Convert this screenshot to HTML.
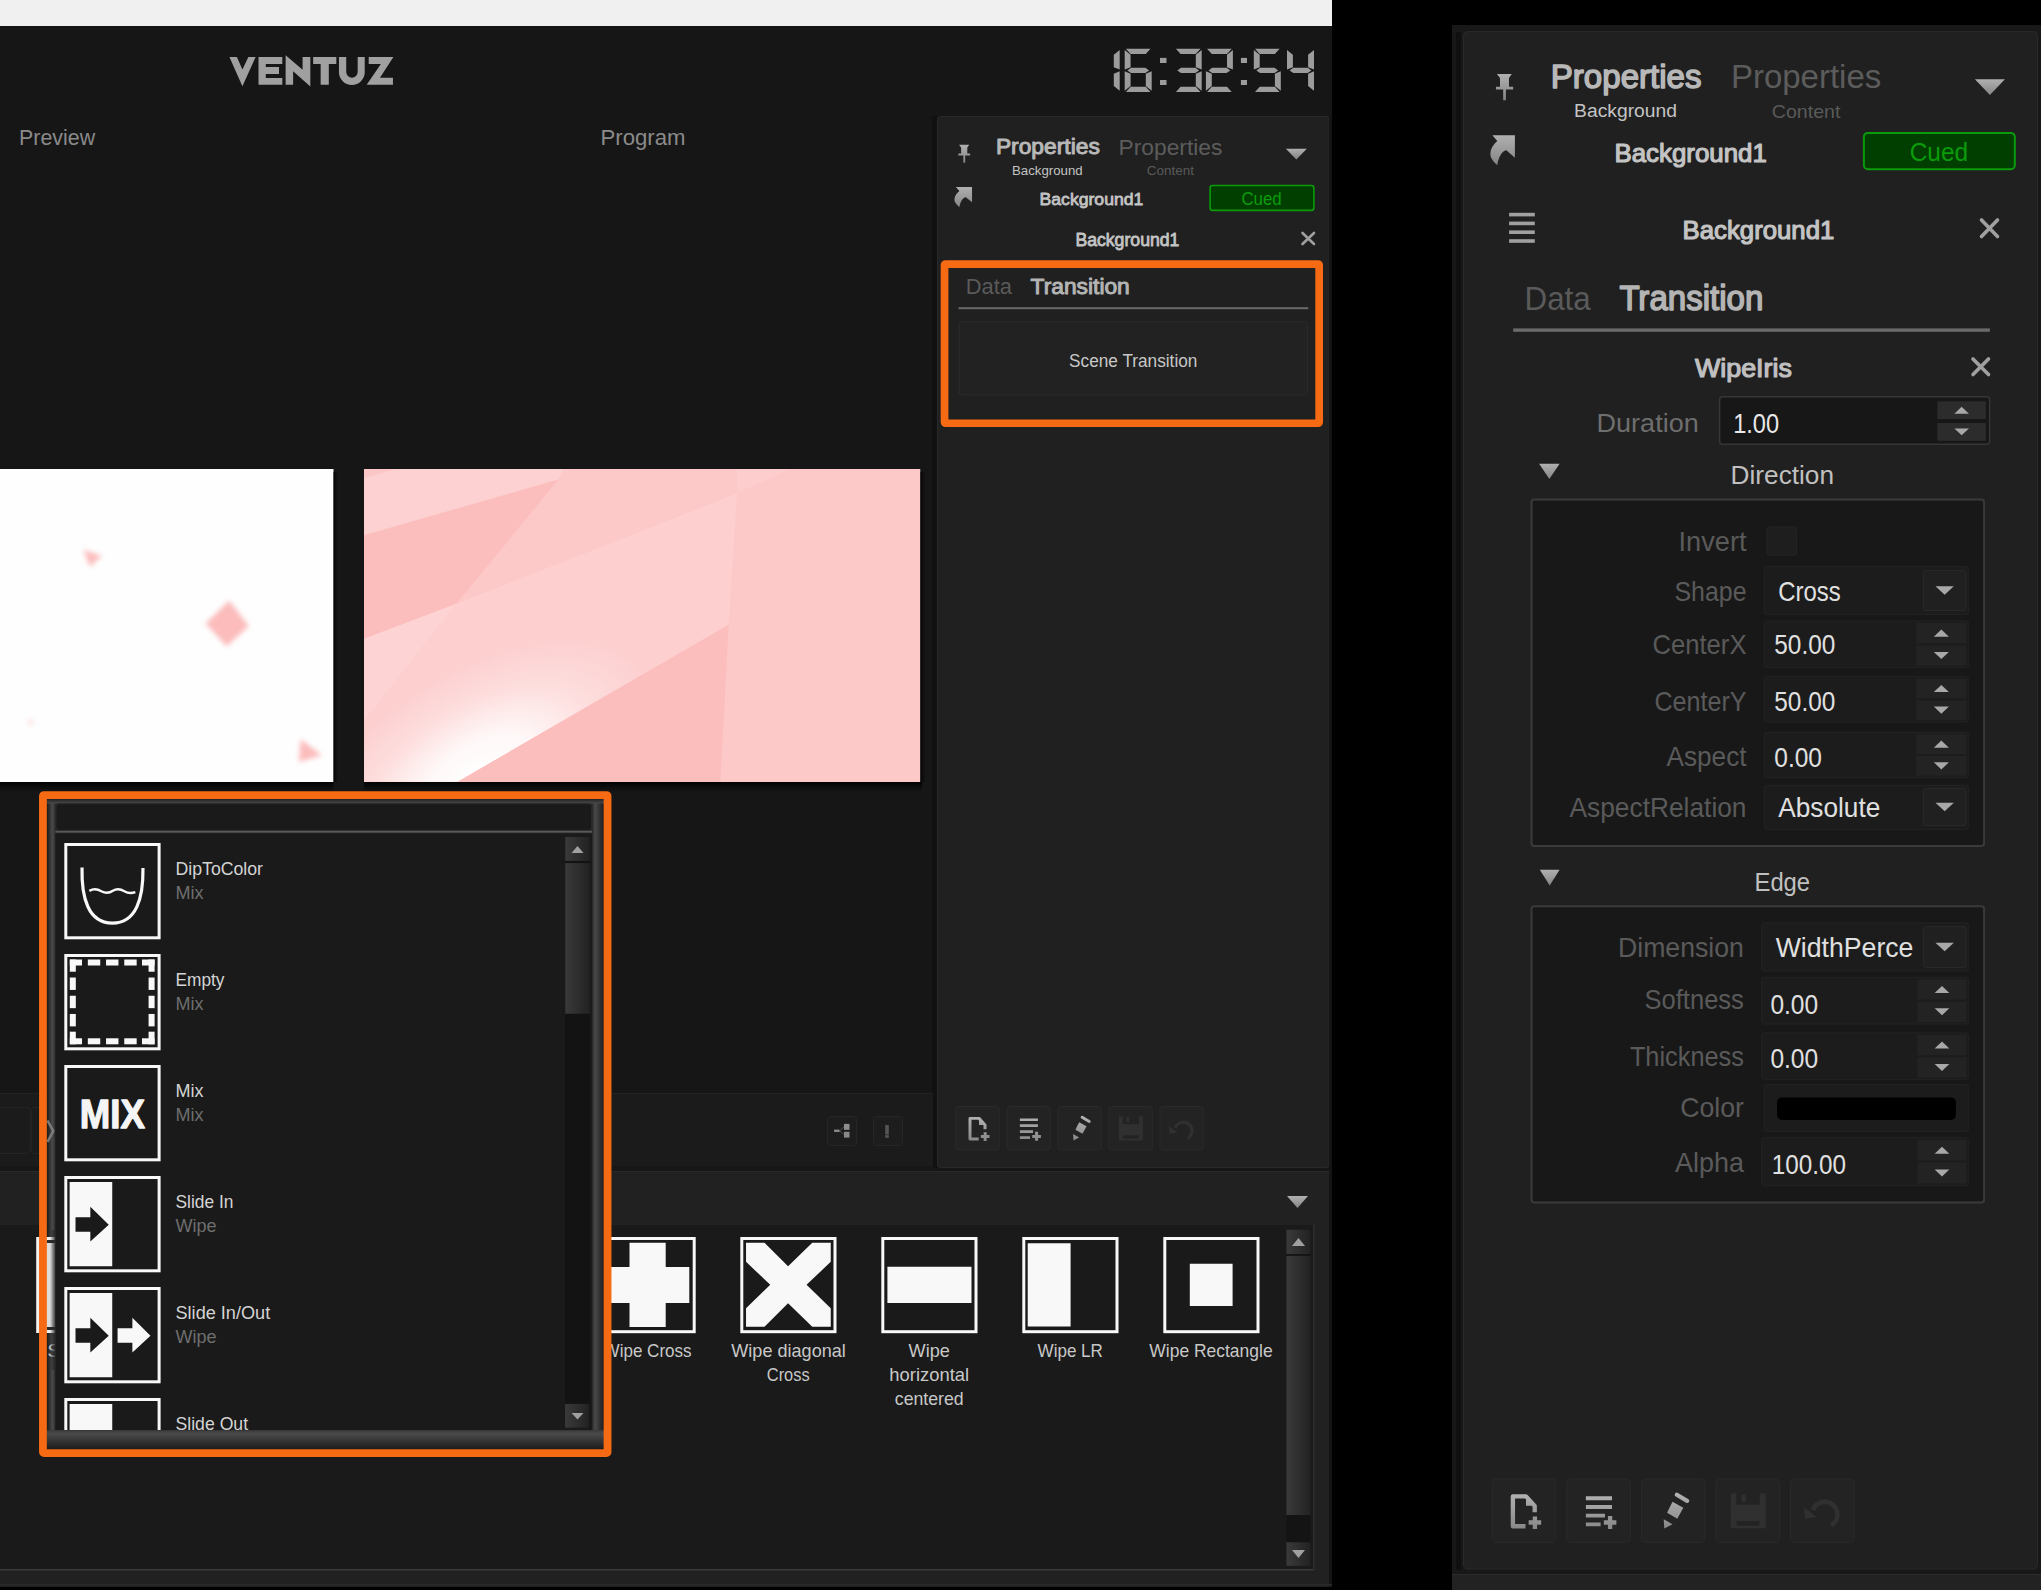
<!DOCTYPE html>
<html><head><meta charset="utf-8"><style>
html,body{margin:0;padding:0;background:#000;overflow:hidden;width:2041px;height:1590px}
svg{display:block}
</style></head><body>
<svg width="2041" height="1590" viewBox="0 0 2041 1590">
<rect x="0" y="0" width="2041" height="1590" fill="#000"/>
<rect x="0" y="0" width="1332" height="26" fill="#f0f0f0"/>
<rect x="0" y="26" width="1332" height="1561" fill="#161616"/>
<polygon points="229.41,57.05 236.90,57.05 242.42,69.40 248.37,57.05 255.64,57.05 242.42,86.16" fill="#a0a0a0" />
<polygon points="258.51,57.05 282.32,57.05 282.32,64.11 265.78,64.11 265.78,66.98 279.01,66.98 279.01,74.03 265.78,74.03 265.78,78.00 282.32,78.00 282.32,84.83 258.51,84.83" fill="#a0a0a0" />
<polygon points="285.63,55.29 302.60,69.84 302.60,57.05 310.32,57.05 310.32,86.60 293.12,71.16 293.12,84.83 285.63,84.83" fill="#a0a0a0" />
<polygon points="313.16,57.05 336.31,57.05 336.31,64.11 328.81,64.11 328.81,84.83 320.65,84.83 320.65,64.11 313.16,64.11" fill="#a0a0a0" />
<path d="M338.95,57.05 H346.23 V72.05 A5.73,5.73 0 0 0 357.69,72.05 V57.05 H364.74 V72.05 A12.87,12.87 0 0 1 338.95,72.05 Z" fill="#a0a0a0"/>
<polygon points="368.71,57.05 393.40,57.05 379.96,77.78 392.96,77.78 392.96,84.83 366.73,84.83 380.84,64.11 368.71,64.11" fill="#a0a0a0" />
<polygon points="1119.70,50.00 1113.80,54.70 1113.80,67.15 1119.70,69.60" fill="#9c9c9c" />
<polygon points="1119.70,71.20 1113.80,73.65 1113.80,86.10 1119.70,90.80" fill="#9c9c9c" />
<polygon points="1125.90,48.80 1150.50,48.80 1145.80,54.10 1130.60,54.10" fill="#9c9c9c" />
<polygon points="1124.70,50.00 1130.60,54.70 1130.60,67.15 1124.70,69.60" fill="#9c9c9c" />
<polygon points="1127.30,70.40 1131.00,67.75 1145.40,67.75 1149.10,70.40 1145.40,73.05 1131.00,73.05" fill="#9c9c9c" />
<polygon points="1124.70,71.20 1130.60,73.65 1130.60,86.10 1124.70,90.80" fill="#9c9c9c" />
<polygon points="1125.90,92.00 1150.50,92.00 1145.80,86.70 1130.60,86.70" fill="#9c9c9c" />
<polygon points="1151.70,71.20 1145.80,73.65 1145.80,86.10 1151.70,90.80" fill="#9c9c9c" />
<rect x="1160" y="57.9" width="6.5" height="5.100000000000001" fill="#9c9c9c"/>
<rect x="1160" y="80" width="6.5" height="5" fill="#9c9c9c"/>
<polygon points="1175.90,48.80 1200.50,48.80 1195.80,54.10 1180.60,54.10" fill="#9c9c9c" />
<polygon points="1201.70,50.00 1195.80,54.70 1195.80,67.15 1201.70,69.60" fill="#9c9c9c" />
<polygon points="1177.30,70.40 1181.00,67.75 1195.40,67.75 1199.10,70.40 1195.40,73.05 1181.00,73.05" fill="#9c9c9c" />
<polygon points="1201.70,71.20 1195.80,73.65 1195.80,86.10 1201.70,90.80" fill="#9c9c9c" />
<polygon points="1175.90,92.00 1200.50,92.00 1195.80,86.70 1180.60,86.70" fill="#9c9c9c" />
<polygon points="1207.10,48.80 1231.70,48.80 1227.00,54.10 1211.80,54.10" fill="#9c9c9c" />
<polygon points="1232.90,50.00 1227.00,54.70 1227.00,67.15 1232.90,69.60" fill="#9c9c9c" />
<polygon points="1208.50,70.40 1212.20,67.75 1226.60,67.75 1230.30,70.40 1226.60,73.05 1212.20,73.05" fill="#9c9c9c" />
<polygon points="1205.90,71.20 1211.80,73.65 1211.80,86.10 1205.90,90.80" fill="#9c9c9c" />
<polygon points="1207.10,92.00 1231.70,92.00 1227.00,86.70 1211.80,86.70" fill="#9c9c9c" />
<rect x="1240.9" y="57.9" width="6.099999999999909" height="5.100000000000001" fill="#9c9c9c"/>
<rect x="1240.9" y="80" width="6.099999999999909" height="5" fill="#9c9c9c"/>
<polygon points="1255.00,48.80 1279.60,48.80 1274.90,54.10 1259.70,54.10" fill="#9c9c9c" />
<polygon points="1253.80,50.00 1259.70,54.70 1259.70,67.15 1253.80,69.60" fill="#9c9c9c" />
<polygon points="1256.40,70.40 1260.10,67.75 1274.50,67.75 1278.20,70.40 1274.50,73.05 1260.10,73.05" fill="#9c9c9c" />
<polygon points="1280.80,71.20 1274.90,73.65 1274.90,86.10 1280.80,90.80" fill="#9c9c9c" />
<polygon points="1255.00,92.00 1279.60,92.00 1274.90,86.70 1259.70,86.70" fill="#9c9c9c" />
<polygon points="1287.00,50.00 1292.90,54.70 1292.90,67.15 1287.00,69.60" fill="#9c9c9c" />
<polygon points="1289.60,70.40 1293.30,67.75 1307.70,67.75 1311.40,70.40 1307.70,73.05 1293.30,73.05" fill="#9c9c9c" />
<polygon points="1314.00,50.00 1308.10,54.70 1308.10,67.15 1314.00,69.60" fill="#9c9c9c" />
<polygon points="1314.00,71.20 1308.10,73.65 1308.10,86.10 1314.00,90.80" fill="#9c9c9c" />
<text x="19.1" y="144.6" style="font-family:'Liberation Sans';font-size:21.51px;font-weight:400" fill="#8a8a8a" text-anchor="start" textLength="76.0" lengthAdjust="spacingAndGlyphs">Preview</text>
<text x="600.5" y="144.6" style="font-family:'Liberation Sans';font-size:21.51px;font-weight:400" fill="#8a8a8a" text-anchor="start" textLength="85.0" lengthAdjust="spacingAndGlyphs">Program</text>
<defs><filter id="blur2" x="-50%" y="-50%" width="200%" height="200%"><feGaussianBlur stdDeviation="2.6"/></filter><radialGradient id="glow" cx="0.5" cy="0.5" r="0.5"><stop offset="0" stop-color="#fff" stop-opacity="1"/><stop offset="0.35" stop-color="#fff" stop-opacity="0.9"/><stop offset="1" stop-color="#fff" stop-opacity="0"/></radialGradient><clipPath id="progclip"><rect x="364" y="469" width="556.5" height="313"/></clipPath><clipPath id="prevclip"><rect x="0" y="469" width="333.5" height="313"/></clipPath></defs>
<rect x="0" y="469" width="333.5" height="313" fill="#fefefe"/>
<g clip-path="url(#prevclip)"><g filter="url(#blur2)">
<polygon points="229.30,600.60 248.80,626.10 226.70,646.50 205.50,623.60" fill="#fcbcbc" />
<polygon points="83.20,549.70 101.90,555.70 90.00,566.70" fill="#fcbcbc" />
<polygon points="300.60,739.00 321.80,755.20 298.90,762.00" fill="#fcbcbc" />
<circle cx="30.6" cy="722.1" r="3" fill="#fde0e0"/>
</g></g>
<defs><clipPath id="bandclip"><polygon points="364.2,638.7 456.4,603.8 737.0,493.5 728.7,624.7 457.8,781.7 364.2,781.7"/></clipPath><radialGradient id="glow2" cx="0.5" cy="0.5" r="0.5"><stop offset="0" stop-color="#fff" stop-opacity="1"/><stop offset="0.3" stop-color="#fff" stop-opacity="0.85"/><stop offset="0.65" stop-color="#fff" stop-opacity="0.3"/><stop offset="1" stop-color="#fff" stop-opacity="0"/></radialGradient></defs>
<g clip-path="url(#progclip)">
<rect x="364" y="469" width="556.5" height="313" fill="#fdc8c8"/>
<polygon points="364.20,468.90 563.88,468.90 558.30,479.51 364.20,535.37" fill="#fdd1d1" />
<polygon points="364.20,468.90 396.32,468.90 364.20,478.12" fill="#fcc6c6" />
<polygon points="364.20,535.37 558.30,479.51 456.36,603.79 364.20,638.70" fill="#fcbdbd" />
<polygon points="456.36,603.79 737.03,493.48 728.65,624.74 457.76,781.69 364.20,781.69 364.20,721.09" fill="#fdcfcf" />
<polygon points="364.20,638.70 456.36,603.79 364.20,721.09" fill="#fdd3d3" />
<polygon points="737.03,468.90 790.09,468.90 737.03,493.48" fill="#fdcdcd" />
<g clip-path="url(#bandclip)"><ellipse cx="477.3" cy="775.5" rx="200" ry="105" fill="url(#glow2)" transform="rotate(-32 477.3 775.5)"/></g>
<polygon points="457.76,781.69 728.65,624.74 720.28,781.69" fill="#fcbdbd" />
</g>
<defs><linearGradient id="shB" x1="0" y1="0" x2="0" y2="1"><stop offset="0" stop-color="#000" stop-opacity="0.9"/><stop offset="1" stop-color="#000" stop-opacity="0"/></linearGradient><linearGradient id="shR" x1="0" y1="0" x2="1" y2="0"><stop offset="0" stop-color="#000" stop-opacity="0.8"/><stop offset="1" stop-color="#000" stop-opacity="0"/></linearGradient></defs>
<rect x="0" y="782" width="333.5" height="10" fill="url(#shB)"/>
<rect x="364" y="782" width="558" height="10" fill="url(#shB)"/>
<rect x="333.5" y="472" width="4.5" height="310" fill="url(#shR)"/>
<rect x="920.5" y="472" width="4.5" height="310" fill="url(#shR)"/>
<defs><linearGradient id="icg" gradientUnits="userSpaceOnUse" x1="0" y1="15" x2="0" y2="50"><stop offset="0" stop-color="#b2b2b2"/><stop offset="1" stop-color="#888888"/></linearGradient><linearGradient id="icg2" x1="0" y1="0" x2="0" y2="1"><stop offset="0" stop-color="#b0b0b0"/><stop offset="1" stop-color="#858585"/></linearGradient></defs>
<rect x="932" y="116" width="5" height="1052" fill="#111111"/>
<rect x="937.5" y="116.5" width="391.5" height="1051" fill="#202020" stroke="#292929" stroke-width="1" rx="3"/>
<g transform="translate(958.60,145.00) scale(1.0000)">
<g transform="scale(0.0844,0.0843)">
<path d="M5,-2 H126 L103,31 V102 H137 V125 H78 V212 H56 V125 H-3 V102 H30 V31 Z" fill="url(#icg2)"/>
</g>
</g>
<text x="995.9" y="154.4" style="font-family:'Liberation Sans';font-size:21.93px;font-weight:400" fill="#b8b8b8" text-anchor="start" textLength="103.9" lengthAdjust="spacingAndGlyphs" stroke="#b8b8b8" stroke-width="0.99" stroke-linejoin="round">Properties</text>
<text x="1118.6" y="154.5" style="font-family:'Liberation Sans';font-size:21.93px;font-weight:400" fill="#5c5c5c" text-anchor="start" textLength="103.7" lengthAdjust="spacingAndGlyphs">Properties</text>
<text x="1012.0" y="175.0" style="font-family:'Liberation Sans';font-size:13.69px;font-weight:400" fill="#c4c4c4" text-anchor="start" textLength="70.6" lengthAdjust="spacingAndGlyphs">Background</text>
<text x="1146.8" y="174.6" style="font-family:'Liberation Sans';font-size:12.57px;font-weight:400" fill="#5a5a5a" text-anchor="start" textLength="47.3" lengthAdjust="spacingAndGlyphs">Content</text>
<polygon points="1285.90,148.70 1306.80,148.70 1296.35,159.40" fill="url(#icg2)" />
<g transform="translate(954.70,186.80) scale(1.0000)">
<g transform="scale(0.0882,0.0824)">
<path d="M13,1.6 L196.6,1.6 L196.6,186 L126.5,126 C90,130 60,190 53,248 C20,215 -5,185 -3,157 C-3,110 25,75 53,50 Z" fill="url(#icg2)"/>
</g>
</g>
<text x="1039.5" y="204.9" style="font-family:'Liberation Sans';font-size:17.18px;font-weight:400" fill="#c4c4c4" text-anchor="start" textLength="103.9" lengthAdjust="spacingAndGlyphs" stroke="#c4c4c4" stroke-width="0.77" stroke-linejoin="round">Background1</text>
<rect x="1210.1" y="185.5" width="103.8" height="24.9" fill="#003f00" stroke="#0a9a0a" stroke-width="1.6" rx="2.5"/>
<text x="1241.4" y="204.8" style="font-family:'Liberation Sans';font-size:17.88px;font-weight:400" fill="#0b9b0b" text-anchor="start" textLength="40.3" lengthAdjust="spacingAndGlyphs">Cued</text>
<text x="1075.4" y="245.5" style="font-family:'Liberation Sans';font-size:17.46px;font-weight:400" fill="#c4c4c4" text-anchor="start" textLength="104.0" lengthAdjust="spacingAndGlyphs" stroke="#c4c4c4" stroke-width="0.79" stroke-linejoin="round">Background1</text>
<path d="M1302.5,233 L1314,244 M1314,233 L1302.5,244" stroke="#a0a0a0" stroke-width="2.6" stroke-linecap="round"/>
<rect x="944.55" y="264.05" width="374.6" height="159.2" fill="none" stroke="#f66a14" stroke-width="7.7" rx="1"/>
<text x="965.8" y="293.6" style="font-family:'Liberation Sans';font-size:22.21px;font-weight:400" fill="#5a5a5a" text-anchor="start" textLength="46.2" lengthAdjust="spacingAndGlyphs">Data</text>
<text x="1030.6" y="293.6" style="font-family:'Liberation Sans';font-size:22.63px;font-weight:400" fill="#b4b4b4" text-anchor="start" textLength="99.2" lengthAdjust="spacingAndGlyphs" stroke="#b4b4b4" stroke-width="1.02" stroke-linejoin="round">Transition</text>
<rect x="958.5" y="307.2" width="349.79999999999995" height="2.0" fill="#6a6a6a"/>
<rect x="959.3" y="321.8" width="348" height="73.1" fill="#222222" stroke="#2c2c2c" stroke-width="1" rx="3"/>
<text x="1069.1" y="366.6" style="font-family:'Liberation Sans';font-size:17.46px;font-weight:400" fill="#c8c8c8" text-anchor="start" textLength="128.3" lengthAdjust="spacingAndGlyphs">Scene Transition</text>
<rect x="955.9" y="1106.5" width="43.5" height="43.5" fill="#232323" stroke="#2a2a2a" stroke-width="1" rx="3.115"/>
<g transform="translate(955.40,1106.00) scale(0.6953)">
<path d="M33.5,47.4 H21 V17.8 H34 L42.6,27.2 V33.5" fill="none" stroke="url(#icg)" stroke-width="4.3" stroke-linejoin="round"/>
<path d="M34,17.8 L42.6,27.2 H34 Z" fill="url(#icg)"/>
<path d="M36.6,43.7 H49 M42.8,37.8 V50.2" stroke="url(#icg)" stroke-width="4.3"/>
</g>
<rect x="1006.9" y="1106.5" width="43.5" height="43.5" fill="#232323" stroke="#2a2a2a" stroke-width="1" rx="3.115"/>
<g transform="translate(1006.40,1106.00) scale(0.6953)">
<path d="M19.4,19.7 H45.3 M19.4,28.3 H45.3 M19.4,36.9 H38.3 M19.4,45.5 H34" stroke="url(#icg)" stroke-width="3.8"/>
<path d="M37.2,43.7 H49.6 M43.4,37.2 V50.1" stroke="url(#icg)" stroke-width="4.3"/>
</g>
<rect x="1057.9" y="1106.5" width="43.5" height="43.5" fill="#232323" stroke="#2a2a2a" stroke-width="1" rx="3.115"/>
<g transform="translate(1057.40,1106.00) scale(0.6953)">
<path d="M35.6,16.2 L45.8,22.2" stroke="url(#icg)" stroke-width="4.2" stroke-linecap="round"/>
<polygon points="31.3,23.2 42,29.1 36.1,39.9 25.9,34" fill="url(#icg)"/>
<polygon points="22.6,40.4 31.3,45.3 23.2,49.6" fill="url(#icg)"/>
</g>
<rect x="1108.9" y="1106.5" width="43.5" height="43.5" fill="#232323" stroke="#2a2a2a" stroke-width="1" rx="3.115"/>
<g transform="translate(1108.40,1106.00) scale(0.6953)">
<path d="M15.1,14.9 H20.5 V26.1 H43.9 V14.9 H49.7 V49.5 H15.1 Z M20.9,42.2 V46.8 H43.4 V42.2 Z" fill="#303030" fill-rule="evenodd"/>
<rect x="26" y="15.7" width="4" height="7.6" fill="#303030"/>
</g>
<rect x="1159.9" y="1106.5" width="43.5" height="43.5" fill="#232323" stroke="#2a2a2a" stroke-width="1" rx="3.115"/>
<g transform="translate(1159.40,1106.00) scale(0.6953)">
<path d="M40.65,46.6 A12.5,12.5 0 1 0 22.65,31.5" fill="none" stroke="#303030" stroke-width="4.6"/>
<polygon points="13.8,28.3 26.3,38.3 14.6,39.9" fill="#303030"/>
</g>
<rect x="1452" y="25" width="589" height="1565" fill="#181818"/>
<rect x="1456" y="32" width="5" height="1538" fill="#101010"/>
<rect x="1463.5" y="31.5" width="574" height="1537.5" fill="#202020" stroke="#292929" stroke-width="1" rx="4"/>
<rect x="1452" y="1574" width="589" height="16" fill="#222222"/>
<rect x="1452" y="1574" width="589" height="1" fill="#2b2b2b"/>
<g transform="translate(1496.30,74.30) scale(1.0000)">
<g transform="scale(0.1230,0.1224)">
<path d="M5,-2 H126 L103,31 V102 H137 V125 H78 V212 H56 V125 H-3 V102 H30 V31 Z" fill="url(#icg2)"/>
</g>
</g>
<text x="1550.8" y="87.8" style="font-family:'Liberation Sans';font-size:32.54px;font-weight:400" fill="#b8b8b8" text-anchor="start" textLength="150.7" lengthAdjust="spacingAndGlyphs" stroke="#b8b8b8" stroke-width="1.46" stroke-linejoin="round">Properties</text>
<text x="1730.9" y="88.3" style="font-family:'Liberation Sans';font-size:32.54px;font-weight:400" fill="#5c5c5c" text-anchor="start" textLength="150.4" lengthAdjust="spacingAndGlyphs">Properties</text>
<text x="1574.1" y="117.4" style="font-family:'Liberation Sans';font-size:19.13px;font-weight:400" fill="#c4c4c4" text-anchor="start" textLength="102.9" lengthAdjust="spacingAndGlyphs">Background</text>
<text x="1771.8" y="117.7" style="font-family:'Liberation Sans';font-size:18.72px;font-weight:400" fill="#5a5a5a" text-anchor="start" textLength="68.6" lengthAdjust="spacingAndGlyphs">Content</text>
<polygon points="1974.90,79.30 2004.90,79.30 1989.90,95.10" fill="url(#icg2)" />
<g transform="translate(1490.80,135.00) scale(1.0000)">
<g transform="scale(0.1226,0.1220)">
<path d="M13,1.6 L196.6,1.6 L196.6,186 L126.5,126 C90,130 60,190 53,248 C20,215 -5,185 -3,157 C-3,110 25,75 53,50 Z" fill="url(#icg2)"/>
</g>
</g>
<text x="1614.5" y="161.5" style="font-family:'Liberation Sans';font-size:25.70px;font-weight:400" fill="#c4c4c4" text-anchor="start" textLength="152.3" lengthAdjust="spacingAndGlyphs" stroke="#c4c4c4" stroke-width="1.16" stroke-linejoin="round">Background1</text>
<rect x="1863.9" y="132.9" width="150.9" height="36.4" fill="#003f00" stroke="#0a9a0a" stroke-width="2" rx="4"/>
<text x="1909.7" y="161.1" style="font-family:'Liberation Sans';font-size:25.56px;font-weight:400" fill="#0b9b0b" text-anchor="start" textLength="58.5" lengthAdjust="spacingAndGlyphs">Cued</text>
<rect x="1509.1" y="212.8" width="25.700000000000045" height="3.5999999999999943" fill="#a0a0a0"/>
<rect x="1509.1" y="221.6" width="25.700000000000045" height="3.5999999999999943" fill="#a0a0a0"/>
<rect x="1509.1" y="230.4" width="25.700000000000045" height="3.5999999999999943" fill="#a0a0a0"/>
<rect x="1509.1" y="239.2" width="25.700000000000045" height="3.5999999999999943" fill="#a0a0a0"/>
<text x="1682.6" y="238.5" style="font-family:'Liberation Sans';font-size:26.68px;font-weight:400" fill="#c4c4c4" text-anchor="start" textLength="151.7" lengthAdjust="spacingAndGlyphs" stroke="#c4c4c4" stroke-width="1.20" stroke-linejoin="round">Background1</text>
<path d="M1981.5,220 L1997.5,236.5 M1997.5,220 L1981.5,236.5" stroke="#a0a0a0" stroke-width="3.6" stroke-linecap="round"/>
<text x="1524.5" y="309.8" style="font-family:'Liberation Sans';font-size:33.94px;font-weight:400" fill="#5a5a5a" text-anchor="start" textLength="66.2" lengthAdjust="spacingAndGlyphs">Data</text>
<text x="1619.4" y="309.8" style="font-family:'Liberation Sans';font-size:34.64px;font-weight:400" fill="#b4b4b4" text-anchor="start" textLength="144.0" lengthAdjust="spacingAndGlyphs" stroke="#b4b4b4" stroke-width="1.56" stroke-linejoin="round">Transition</text>
<rect x="1513.2" y="328.4" width="476.70000000000005" height="3.400000000000034" fill="#6a6a6a"/>
<text x="1694.9" y="377.0" style="font-family:'Liberation Sans';font-size:26.68px;font-weight:400" fill="#c0c0c0" text-anchor="start" textLength="97.0" lengthAdjust="spacingAndGlyphs" stroke="#c0c0c0" stroke-width="1.20" stroke-linejoin="round">WipeIris</text>
<path d="M1973,359 L1988.5,374.5 M1988.5,359 L1973,374.5" stroke="#a0a0a0" stroke-width="3.6" stroke-linecap="round"/>
<text x="1596.6" y="431.9" style="font-family:'Liberation Sans';font-size:26.68px;font-weight:400" fill="#6e6e6e" text-anchor="start" textLength="102.1" lengthAdjust="spacingAndGlyphs">Duration</text>
<rect x="1719.6" y="396.7" width="270" height="47.5" fill="#171717" stroke="#363636" stroke-width="1.5" rx="3"/>
<text x="1733.2" y="433.2" style="font-family:'Liberation Sans';font-size:26.82px;font-weight:400" fill="#e8e8e8" text-anchor="start" textLength="45.9" lengthAdjust="spacingAndGlyphs">1.00</text>
<rect x="1937.4" y="401.3" width="48.5" height="17.80000000000001" fill="#2c2c2c"/>
<rect x="1937.4" y="423" width="48.5" height="17.80000000000001" fill="#2c2c2c"/>
<polygon points="1954.38,413.66 1968.93,413.66 1961.65,406.74" fill="#a8a8a8" />
<polygon points="1954.38,428.44 1968.93,428.44 1961.65,435.36" fill="#a8a8a8" />
<polygon points="1539.10,463.80 1559.60,463.80 1549.35,479.10" fill="url(#icg2)" />
<text x="1730.6" y="484.2" style="font-family:'Liberation Sans';font-size:26.68px;font-weight:400" fill="#c0c0c0" text-anchor="start" textLength="103.4" lengthAdjust="spacingAndGlyphs">Direction</text>
<rect x="1531.5" y="499.6" width="452.6" height="346.5" fill="#181818" stroke="#3a3a3a" stroke-width="2" rx="3"/>
<text x="1678.5" y="551.0" style="font-family:'Liberation Sans';font-size:26.82px;font-weight:400" fill="#5a5a5a" text-anchor="start" textLength="68.0" lengthAdjust="spacingAndGlyphs">Invert</text>
<rect x="1767" y="527" width="29.5" height="28" fill="#1e1e1e" stroke="#242424" stroke-width="1" rx="2"/>
<text x="1674.5" y="600.6" style="font-family:'Liberation Sans';font-size:26.82px;font-weight:400" fill="#5a5a5a" text-anchor="start" textLength="72.0" lengthAdjust="spacingAndGlyphs">Shape</text>
<rect x="1764.2" y="566.6" width="204.5" height="48.1" fill="#1c1c1c" stroke="#232323" stroke-width="1" rx="3"/>
<rect x="1923.3" y="570.5" width="42.700000000000045" height="40" fill="#202020" stroke="#282828" stroke-width="1" rx="2"/>
<polygon points="1935.47,586.14 1953.83,586.14 1944.65,594.86" fill="#a8a8a8" />
<text x="1778.3" y="600.6" style="font-family:'Liberation Sans';font-size:26.82px;font-weight:400" fill="#e0e0e0" text-anchor="start" textLength="62.5" lengthAdjust="spacingAndGlyphs">Cross</text>
<text x="1652.5" y="653.6" style="font-family:'Liberation Sans';font-size:26.82px;font-weight:400" fill="#5a5a5a" text-anchor="start" textLength="94.0" lengthAdjust="spacingAndGlyphs">CenterX</text>
<rect x="1764.2" y="621.0" width="204.5" height="46.700000000000045" fill="#1c1c1c" stroke="#232323" stroke-width="1" rx="3"/>
<rect x="1916.2" y="623.0" width="50.299999999999955" height="20.350000000000023" fill="#232323"/>
<rect x="1916.2" y="645.35" width="50.299999999999955" height="20.350000000000023" fill="#232323"/>
<polygon points="1933.80,636.76 1948.89,636.76 1941.35,629.59" fill="#a8a8a8" />
<polygon points="1933.80,651.94 1948.89,651.94 1941.35,659.11" fill="#a8a8a8" />
<text x="1774.3" y="654.1" style="font-family:'Liberation Sans';font-size:26.82px;font-weight:400" fill="#e0e0e0" text-anchor="start" textLength="61.0" lengthAdjust="spacingAndGlyphs">50.00</text>
<text x="1654.5" y="710.6" style="font-family:'Liberation Sans';font-size:26.82px;font-weight:400" fill="#5a5a5a" text-anchor="start" textLength="92.0" lengthAdjust="spacingAndGlyphs">CenterY</text>
<rect x="1764.2" y="676.7" width="204.5" height="45.299999999999955" fill="#1c1c1c" stroke="#232323" stroke-width="1" rx="3"/>
<rect x="1916.2" y="678.7" width="50.299999999999955" height="19.649999999999977" fill="#232323"/>
<rect x="1916.2" y="700.35" width="50.299999999999955" height="19.649999999999977" fill="#232323"/>
<polygon points="1933.80,692.11 1948.89,692.11 1941.35,684.94" fill="#a8a8a8" />
<polygon points="1933.80,706.59 1948.89,706.59 1941.35,713.76" fill="#a8a8a8" />
<text x="1774.3" y="711.1" style="font-family:'Liberation Sans';font-size:26.82px;font-weight:400" fill="#e0e0e0" text-anchor="start" textLength="61.0" lengthAdjust="spacingAndGlyphs">50.00</text>
<text x="1666.5" y="766.3" style="font-family:'Liberation Sans';font-size:26.82px;font-weight:400" fill="#5a5a5a" text-anchor="start" textLength="80.0" lengthAdjust="spacingAndGlyphs">Aspect</text>
<rect x="1764.2" y="732.3" width="204.5" height="45.40000000000009" fill="#1c1c1c" stroke="#232323" stroke-width="1" rx="3"/>
<rect x="1916.2" y="734.3" width="50.299999999999955" height="19.700000000000045" fill="#232323"/>
<rect x="1916.2" y="756.0" width="50.299999999999955" height="19.700000000000045" fill="#232323"/>
<polygon points="1933.80,747.73 1948.89,747.73 1941.35,740.57" fill="#a8a8a8" />
<polygon points="1933.80,762.27 1948.89,762.27 1941.35,769.43" fill="#a8a8a8" />
<text x="1774.3" y="766.8" style="font-family:'Liberation Sans';font-size:26.82px;font-weight:400" fill="#e0e0e0" text-anchor="start" textLength="47.7" lengthAdjust="spacingAndGlyphs">0.00</text>
<text x="1569.5" y="816.6" style="font-family:'Liberation Sans';font-size:26.82px;font-weight:400" fill="#5a5a5a" text-anchor="start" textLength="177.0" lengthAdjust="spacingAndGlyphs">AspectRelation</text>
<rect x="1764.2" y="785.3" width="204.5" height="44.1" fill="#1c1c1c" stroke="#232323" stroke-width="1" rx="3"/>
<rect x="1923.3" y="788.5" width="42.700000000000045" height="37" fill="#202020" stroke="#282828" stroke-width="1" rx="2"/>
<polygon points="1935.47,802.64 1953.83,802.64 1944.65,811.36" fill="#a8a8a8" />
<text x="1778.3" y="816.6" style="font-family:'Liberation Sans';font-size:26.82px;font-weight:400" fill="#e0e0e0" text-anchor="start" textLength="102.0" lengthAdjust="spacingAndGlyphs">Absolute</text>
<polygon points="1539.80,869.70 1559.60,869.70 1549.70,885.60" fill="url(#icg2)" />
<text x="1754.5" y="890.9" style="font-family:'Liberation Sans';font-size:26.68px;font-weight:400" fill="#c0c0c0" text-anchor="start" textLength="55.6" lengthAdjust="spacingAndGlyphs">Edge</text>
<rect x="1531.5" y="906.2" width="452.6" height="296.2" fill="#181818" stroke="#3a3a3a" stroke-width="2" rx="3"/>
<text x="1618.0" y="957.4" style="font-family:'Liberation Sans';font-size:26.82px;font-weight:400" fill="#5a5a5a" text-anchor="start" textLength="125.9" lengthAdjust="spacingAndGlyphs">Dimension</text>
<rect x="1761.6" y="922.9" width="207.1" height="48.1" fill="#1c1c1c" stroke="#232323" stroke-width="1" rx="3"/>
<rect x="1923.3" y="926.5" width="42.700000000000045" height="41" fill="#202020" stroke="#282828" stroke-width="1" rx="2"/>
<polygon points="1935.47,942.64 1953.83,942.64 1944.65,951.36" fill="#a8a8a8" />
<clipPath id="dimclip"><rect x="1770" y="920" width="143" height="50"/></clipPath>
<g clip-path="url(#dimclip)">
<text x="1775.7" y="957.4" style="font-family:'Liberation Sans';font-size:26.82px;font-weight:400" fill="#e0e0e0" text-anchor="start" textLength="160.0" lengthAdjust="spacingAndGlyphs">WidthPercent</text>
</g>
<text x="1644.5" y="1009.1" style="font-family:'Liberation Sans';font-size:26.82px;font-weight:400" fill="#5a5a5a" text-anchor="start" textLength="99.4" lengthAdjust="spacingAndGlyphs">Softness</text>
<rect x="1761.6" y="977.2" width="207.1" height="46.799999999999955" fill="#1c1c1c" stroke="#232323" stroke-width="1" rx="3"/>
<rect x="1917.5" y="979.2" width="49.0" height="20.399999999999977" fill="#232323"/>
<rect x="1917.5" y="1001.6" width="49.0" height="20.399999999999977" fill="#232323"/>
<polygon points="1934.65,992.89 1949.35,992.89 1942.00,985.91" fill="#a8a8a8" />
<polygon points="1934.65,1008.31 1949.35,1008.31 1942.00,1015.29" fill="#a8a8a8" />
<text x="1770.4" y="1014.4" style="font-family:'Liberation Sans';font-size:26.82px;font-weight:400" fill="#e0e0e0" text-anchor="start" textLength="47.7" lengthAdjust="spacingAndGlyphs">0.00</text>
<text x="1629.9" y="1065.5" style="font-family:'Liberation Sans';font-size:26.82px;font-weight:400" fill="#5a5a5a" text-anchor="start" textLength="114.0" lengthAdjust="spacingAndGlyphs">Thickness</text>
<rect x="1761.6" y="1032.9" width="207.1" height="46.69999999999982" fill="#1c1c1c" stroke="#232323" stroke-width="1" rx="3"/>
<rect x="1917.5" y="1034.9" width="49.0" height="20.34999999999991" fill="#232323"/>
<rect x="1917.5" y="1057.25" width="49.0" height="20.34999999999991" fill="#232323"/>
<polygon points="1934.65,1048.57 1949.35,1048.57 1942.00,1041.58" fill="#a8a8a8" />
<polygon points="1934.65,1063.93 1949.35,1063.93 1942.00,1070.92" fill="#a8a8a8" />
<text x="1770.4" y="1068.2" style="font-family:'Liberation Sans';font-size:26.82px;font-weight:400" fill="#e0e0e0" text-anchor="start" textLength="47.7" lengthAdjust="spacingAndGlyphs">0.00</text>
<text x="1680.2" y="1117.2" style="font-family:'Liberation Sans';font-size:26.82px;font-weight:400" fill="#5a5a5a" text-anchor="start" textLength="63.7" lengthAdjust="spacingAndGlyphs">Color</text>
<rect x="1764.2" y="1084.6" width="204.5" height="46.7" fill="#1c1c1c" stroke="#232323" stroke-width="1" rx="3"/>
<rect x="1777" y="1097.4" width="178.9" height="22.5" fill="#000000" rx="5"/>
<text x="1675.0" y="1171.6" style="font-family:'Liberation Sans';font-size:26.82px;font-weight:400" fill="#5a5a5a" text-anchor="start" textLength="68.9" lengthAdjust="spacingAndGlyphs">Alpha</text>
<rect x="1761.6" y="1137.6" width="207.1" height="48.1" fill="#1c1c1c" stroke="#232323" stroke-width="1" rx="3"/>
<rect x="1917.5" y="1140" width="49.0" height="20.5" fill="#232323"/>
<rect x="1917.5" y="1162.5" width="49.0" height="21.0" fill="#232323"/>
<polygon points="1934.65,1153.74 1949.35,1153.74 1942.00,1146.76" fill="#a8a8a8" />
<polygon points="1934.65,1169.51 1949.35,1169.51 1942.00,1176.49" fill="#a8a8a8" />
<text x="1771.7" y="1174.2" style="font-family:'Liberation Sans';font-size:26.82px;font-weight:400" fill="#e0e0e0" text-anchor="start" textLength="74.2" lengthAdjust="spacingAndGlyphs">100.00</text>
<rect x="1492.2" y="1478.9" width="63.599999999999994" height="63.599999999999994" fill="#232323" stroke="#2a2a2a" stroke-width="1" rx="4.522"/>
<g transform="translate(1491.70,1478.40) scale(1.0094)">
<path d="M33.5,47.4 H21 V17.8 H34 L42.6,27.2 V33.5" fill="none" stroke="url(#icg)" stroke-width="4.3" stroke-linejoin="round"/>
<path d="M34,17.8 L42.6,27.2 H34 Z" fill="url(#icg)"/>
<path d="M36.6,43.7 H49 M42.8,37.8 V50.2" stroke="url(#icg)" stroke-width="4.3"/>
</g>
<rect x="1566.8" y="1478.9" width="63.599999999999994" height="63.599999999999994" fill="#232323" stroke="#2a2a2a" stroke-width="1" rx="4.522"/>
<g transform="translate(1566.30,1478.40) scale(1.0094)">
<path d="M19.4,19.7 H45.3 M19.4,28.3 H45.3 M19.4,36.9 H38.3 M19.4,45.5 H34" stroke="url(#icg)" stroke-width="3.8"/>
<path d="M37.2,43.7 H49.6 M43.4,37.2 V50.1" stroke="url(#icg)" stroke-width="4.3"/>
</g>
<rect x="1641.4" y="1478.9" width="63.599999999999994" height="63.599999999999994" fill="#232323" stroke="#2a2a2a" stroke-width="1" rx="4.522"/>
<g transform="translate(1640.90,1478.40) scale(1.0094)">
<path d="M35.6,16.2 L45.8,22.2" stroke="url(#icg)" stroke-width="4.2" stroke-linecap="round"/>
<polygon points="31.3,23.2 42,29.1 36.1,39.9 25.9,34" fill="url(#icg)"/>
<polygon points="22.6,40.4 31.3,45.3 23.2,49.6" fill="url(#icg)"/>
</g>
<rect x="1716.0" y="1478.9" width="63.599999999999994" height="63.599999999999994" fill="#232323" stroke="#2a2a2a" stroke-width="1" rx="4.522"/>
<g transform="translate(1715.50,1478.40) scale(1.0094)">
<path d="M15.1,14.9 H20.5 V26.1 H43.9 V14.9 H49.7 V49.5 H15.1 Z M20.9,42.2 V46.8 H43.4 V42.2 Z" fill="#303030" fill-rule="evenodd"/>
<rect x="26" y="15.7" width="4" height="7.6" fill="#303030"/>
</g>
<rect x="1790.6" y="1478.9" width="63.599999999999994" height="63.599999999999994" fill="#232323" stroke="#2a2a2a" stroke-width="1" rx="4.522"/>
<g transform="translate(1790.10,1478.40) scale(1.0094)">
<path d="M40.65,46.6 A12.5,12.5 0 1 0 22.65,31.5" fill="none" stroke="#303030" stroke-width="4.6"/>
<polygon points="13.8,28.3 26.3,38.3 14.6,39.9" fill="#303030"/>
</g>
<rect x="0" y="1093" width="933" height="73" fill="#1b1b1b"/>
<rect x="0" y="1093" width="933" height="1" fill="#222222"/>
<rect x="0" y="1166" width="933" height="5" fill="#171717"/>
<rect x="-5" y="1107.5" width="35" height="46" fill="none" stroke="#242424" stroke-width="1" rx="3"/>
<rect x="31.5" y="1107.5" width="40" height="46" fill="none" stroke="#242424" stroke-width="1" rx="3"/>
<rect x="827.5" y="1116.5" width="29" height="29" fill="#1d1d1d" stroke="#262626" stroke-width="1" rx="3"/>
<rect x="873.5" y="1116.5" width="29" height="29" fill="#1d1d1d" stroke="#262626" stroke-width="1" rx="3"/>
<rect x="834.1" y="1129.6" width="5.5" height="2.400000000000091" fill="#8a8a8a"/>
<rect x="844" y="1123.9" width="5.5" height="5.899999999999864" fill="#8e8e8e"/>
<rect x="844" y="1131.8" width="5.5" height="5.7999999999999545" fill="#888888"/>
<path d="M839.6,1130.8 L844,1127 M839.6,1130.8 L844,1134.5" stroke="#5a5a5a" stroke-width="0.8"/>
<rect x="885.2" y="1125" width="3.599999999999909" height="9.5" fill="#555555"/>
<rect x="885.2" y="1135.1" width="3.599999999999909" height="2.7000000000000455" fill="#555555"/>
<rect x="0" y="1171" width="1332" height="416" fill="#212121"/>
<rect x="0" y="1171" width="1332" height="1" fill="#2a2a2a"/>
<rect x="1329" y="116" width="3" height="1471" fill="#141414"/>
<polygon points="1287.00,1196.00 1308.00,1196.00 1297.50,1208.00" fill="url(#icg2)" />
<rect x="0" y="1225" width="1314" height="344" fill="#1a1a1a"/>
<rect x="0" y="1569" width="1314" height="1.5" fill="#3a3a3a"/>
<rect x="1313" y="1225" width="1.5" height="345" fill="#2e2e2e"/>
<rect x="0" y="1584" width="1332" height="1.5" fill="#2a2a2a"/>
<rect x="1286.4" y="1229.7" width="24.199999999999818" height="336.29999999999995" fill="#141414"/>
<defs><linearGradient id="sbg" x1="0" x2="1"><stop offset="0" stop-color="#3a3a3a"/><stop offset="0.5" stop-color="#2e2e2e"/><stop offset="1" stop-color="#222"/></linearGradient></defs>
<rect x="1286.4" y="1229.7" width="24.199999999999818" height="24.299999999999955" fill="url(#sbg)"/>
<rect x="1286.4" y="1255.9" width="24.199999999999818" height="259.0999999999999" fill="url(#sbg)"/>
<rect x="1286.4" y="1542.3" width="24.199999999999818" height="23.600000000000136" fill="url(#sbg)"/>
<polygon points="1292.00,1246.00 1305.00,1246.00 1298.50,1238.00" fill="#a0a0a0" />
<polygon points="1292.00,1550.00 1305.00,1550.00 1298.50,1558.00" fill="#a0a0a0" />
<rect x="36.2" y="1237" width="23.799999999999997" height="96" fill="#f0f0f0"/>
<rect x="39.2" y="1240" width="20.799999999999997" height="90" fill="#dcdcdc"/>
<rect x="599.5" y="1237" width="96.20000000000005" height="96.20000000000005" fill="#f8f8f8"/>
<rect x="602.5" y="1240" width="90.20000000000005" height="90.20000000000005" fill="#1a1a1a"/>
<polygon points="629.50,1242.70 665.70,1242.70 665.70,1267.00 689.30,1267.00 689.30,1303.00 665.70,1303.00 665.70,1326.90 629.50,1326.90 629.50,1303.00 605.90,1303.00 605.90,1267.00 629.50,1267.00" fill="#f8f8f8" />
<rect x="740.3" y="1237" width="96.20000000000005" height="96.20000000000005" fill="#f8f8f8"/>
<rect x="743.3" y="1240" width="90.20000000000005" height="90.20000000000005" fill="#1a1a1a"/>
<polygon points="746.03,1242.73 764.50,1242.73 788.07,1266.30 812.27,1242.73 830.75,1242.73 830.75,1261.84 806.54,1284.77 830.75,1308.34 830.75,1326.81 812.27,1326.81 788.07,1303.24 764.50,1326.81 746.03,1326.81 746.03,1308.34 770.24,1284.77 746.03,1261.84" fill="#f8f8f8" />
<rect x="881.3" y="1237" width="96.20000000000005" height="96.20000000000005" fill="#f8f8f8"/>
<rect x="884.3" y="1240" width="90.20000000000005" height="90.20000000000005" fill="#1a1a1a"/>
<polygon points="887.40,1266.70 971.50,1266.70 971.50,1303.00 887.40,1303.00" fill="#f8f8f8" />
<rect x="1022.3" y="1237" width="96.20000000000005" height="96.20000000000005" fill="#f8f8f8"/>
<rect x="1025.3" y="1240" width="90.20000000000005" height="90.20000000000005" fill="#1a1a1a"/>
<polygon points="1027.70,1243.20 1070.60,1243.20 1070.60,1326.60 1027.70,1326.60" fill="#f8f8f8" />
<rect x="1163.3" y="1237" width="96.20000000000005" height="96.20000000000005" fill="#f8f8f8"/>
<rect x="1166.3" y="1240" width="90.20000000000005" height="90.20000000000005" fill="#1a1a1a"/>
<polygon points="1189.80,1263.80 1232.60,1263.80 1232.60,1305.90 1189.80,1305.90" fill="#f8f8f8" />
<text x="603.6" y="1357.4" style="font-family:'Liberation Sans';font-size:18.72px;font-weight:400" fill="#c8c8c8" text-anchor="start" textLength="88.0" lengthAdjust="spacingAndGlyphs">Wipe Cross</text>
<text x="731.3" y="1357.4" style="font-family:'Liberation Sans';font-size:18.72px;font-weight:400" fill="#c8c8c8" text-anchor="start" textLength="114.5" lengthAdjust="spacingAndGlyphs">Wipe diagonal</text>
<text x="766.8" y="1381.0" style="font-family:'Liberation Sans';font-size:18.72px;font-weight:400" fill="#c8c8c8" text-anchor="start" textLength="42.8" lengthAdjust="spacingAndGlyphs">Cross</text>
<text x="908.6" y="1357.4" style="font-family:'Liberation Sans';font-size:18.72px;font-weight:400" fill="#c8c8c8" text-anchor="start" textLength="41.3" lengthAdjust="spacingAndGlyphs">Wipe</text>
<text x="889.3" y="1381.0" style="font-family:'Liberation Sans';font-size:18.72px;font-weight:400" fill="#c8c8c8" text-anchor="start" textLength="79.8" lengthAdjust="spacingAndGlyphs">horizontal</text>
<text x="894.8" y="1404.5" style="font-family:'Liberation Sans';font-size:18.72px;font-weight:400" fill="#c8c8c8" text-anchor="start" textLength="68.9" lengthAdjust="spacingAndGlyphs">centered</text>
<text x="1037.6" y="1357.4" style="font-family:'Liberation Sans';font-size:18.72px;font-weight:400" fill="#c8c8c8" text-anchor="start" textLength="65.3" lengthAdjust="spacingAndGlyphs">Wipe LR</text>
<text x="1149.3" y="1357.4" style="font-family:'Liberation Sans';font-size:18.72px;font-weight:400" fill="#c8c8c8" text-anchor="start" textLength="123.3" lengthAdjust="spacingAndGlyphs">Wipe Rectangle</text>
<defs><linearGradient id="frL" x1="0" x2="1"><stop offset="0" stop-color="#1c1c1c"/><stop offset="0.6" stop-color="#4a4a4a"/><stop offset="1" stop-color="#262626"/></linearGradient><linearGradient id="frR" x1="0" x2="1"><stop offset="0" stop-color="#262626"/><stop offset="0.25" stop-color="#4a4a4a"/><stop offset="1" stop-color="#1c1c1c"/></linearGradient><linearGradient id="frB" x1="0" y1="0" x2="0" y2="1"><stop offset="0" stop-color="#3a3a3a"/><stop offset="0.2" stop-color="#4a4a4a"/><stop offset="1" stop-color="#1c1c1c"/></linearGradient><linearGradient id="frT" x1="0" y1="0" x2="0" y2="1"><stop offset="0" stop-color="#222"/><stop offset="1" stop-color="#4a4a4a"/></linearGradient><clipPath id="listclip"><rect x="55.4" y="833.6" width="510" height="596.5"/></clipPath></defs>
<rect x="47" y="799" width="557" height="650" fill="#262626"/>
<rect x="47" y="799" width="9" height="650" fill="url(#frL)"/>
<rect x="592" y="799" width="12" height="650" fill="url(#frR)"/>
<rect x="47" y="799" width="557" height="4.5" fill="url(#frT)"/>
<rect x="47" y="1430" width="557" height="19" fill="url(#frB)"/>
<rect x="56" y="803.7" width="535.5" height="26.6" fill="#1a1a1a" stroke="#2a2a2a" stroke-width="1" rx="3"/>
<rect x="55.4" y="830.8" width="536.6" height="1.8000000000000682" fill="#5a5a5a"/>
<rect x="55.4" y="833.6" width="536.6" height="596.4999999999999" fill="#1a1a1a"/>
<rect x="565" y="836.9" width="25" height="591.1" fill="#131313"/>
<rect x="565.2" y="836.9" width="24.59999999999991" height="24.0" fill="url(#sbg)"/>
<rect x="565.2" y="863.1" width="24.59999999999991" height="150.60000000000002" fill="url(#sbg)"/>
<rect x="565.1" y="1403.9" width="24.100000000000023" height="23.799999999999955" fill="url(#sbg)"/>
<polygon points="571.50,853.00 583.50,853.00 577.50,846.00" fill="#a0a0a0" />
<polygon points="571.50,1413.00 583.50,1413.00 577.50,1419.50" fill="#a0a0a0" />
<g clip-path="url(#listclip)">
<rect x="64.3" y="843" width="96.3" height="96.29999999999995" fill="#f8f8f8"/>
<rect x="67.3" y="846" width="90.3" height="90.29999999999995" fill="#1a1a1a"/>
<g transform="translate(64.3,843) scale(1.001039501039501)">
<path d="M17.7,24.5 C17,55 24,80 48,80 C72,80 79,55 78.6,25" fill="none" stroke="#f8f8f8" stroke-width="3.2"/>
<path d="M25,47.8 C29,45.6 33,45.8 37,48.2 C41,50.4 45,50.2 48.5,47.8 C52,45.6 56,45.8 60,48.2 C63.5,50.2 67,50.4 71,49" fill="none" stroke="#f8f8f8" stroke-width="2.4"/>
</g>
<text x="175.5" y="874.7" style="font-family:'Liberation Sans';font-size:17.46px;font-weight:400" fill="#d4d4d4" text-anchor="start" textLength="87.5" lengthAdjust="spacingAndGlyphs">DipToColor</text>
<text x="175.5" y="898.9" style="font-family:'Liberation Sans';font-size:17.46px;font-weight:400" fill="#6e6e6e" text-anchor="start" textLength="28.0" lengthAdjust="spacingAndGlyphs">Mix</text>
<rect x="64.3" y="954" width="96.3" height="96.29999999999995" fill="#f8f8f8"/>
<rect x="67.3" y="957" width="90.3" height="90.29999999999995" fill="#1a1a1a"/>
<g transform="translate(64.3,954) scale(1.001039501039501)">
<rect x="5.50" y="5.5" width="12.20" height="6.0" fill="#f8f8f8"/>
<rect x="5.50" y="84.2" width="12.20" height="6.0" fill="#f8f8f8"/>
<rect x="5.5" y="5.50" width="6.0" height="12.20" fill="#f8f8f8"/>
<rect x="84.2" y="5.50" width="6.0" height="12.20" fill="#f8f8f8"/>
<rect x="23.50" y="5.5" width="12.40" height="6.0" fill="#f8f8f8"/>
<rect x="23.50" y="84.2" width="12.40" height="6.0" fill="#f8f8f8"/>
<rect x="5.5" y="23.50" width="6.0" height="12.40" fill="#f8f8f8"/>
<rect x="84.2" y="23.50" width="6.0" height="12.40" fill="#f8f8f8"/>
<rect x="41.70" y="5.5" width="12.40" height="6.0" fill="#f8f8f8"/>
<rect x="41.70" y="84.2" width="12.40" height="6.0" fill="#f8f8f8"/>
<rect x="5.5" y="41.70" width="6.0" height="12.40" fill="#f8f8f8"/>
<rect x="84.2" y="41.70" width="6.0" height="12.40" fill="#f8f8f8"/>
<rect x="59.90" y="5.5" width="12.40" height="6.0" fill="#f8f8f8"/>
<rect x="59.90" y="84.2" width="12.40" height="6.0" fill="#f8f8f8"/>
<rect x="5.5" y="59.90" width="6.0" height="12.40" fill="#f8f8f8"/>
<rect x="84.2" y="59.90" width="6.0" height="12.40" fill="#f8f8f8"/>
<rect x="77.60" y="5.5" width="12.60" height="6.0" fill="#f8f8f8"/>
<rect x="77.60" y="84.2" width="12.60" height="6.0" fill="#f8f8f8"/>
<rect x="5.5" y="77.60" width="6.0" height="12.60" fill="#f8f8f8"/>
<rect x="84.2" y="77.60" width="6.0" height="12.60" fill="#f8f8f8"/>
</g>
<text x="175.5" y="985.7" style="font-family:'Liberation Sans';font-size:17.46px;font-weight:400" fill="#d4d4d4" text-anchor="start" textLength="49.0" lengthAdjust="spacingAndGlyphs">Empty</text>
<text x="175.5" y="1009.9" style="font-family:'Liberation Sans';font-size:17.46px;font-weight:400" fill="#6e6e6e" text-anchor="start" textLength="28.0" lengthAdjust="spacingAndGlyphs">Mix</text>
<rect x="64.3" y="1065" width="96.3" height="96.29999999999995" fill="#f8f8f8"/>
<rect x="67.3" y="1068" width="90.3" height="90.29999999999995" fill="#1a1a1a"/>
<text x="112.4" y="1127.7" text-anchor="middle" textLength="65.1" lengthAdjust="spacingAndGlyphs" style="font-family:'Liberation Sans';font-weight:700;font-size:40.5px" fill="#f5f5f5" stroke="#f5f5f5" stroke-width="1.3" stroke-linejoin="round">MIX</text>
<text x="175.5" y="1096.7" style="font-family:'Liberation Sans';font-size:17.46px;font-weight:400" fill="#d4d4d4" text-anchor="start" textLength="28.0" lengthAdjust="spacingAndGlyphs">Mix</text>
<text x="175.5" y="1120.9" style="font-family:'Liberation Sans';font-size:17.46px;font-weight:400" fill="#6e6e6e" text-anchor="start" textLength="28.0" lengthAdjust="spacingAndGlyphs">Mix</text>
<rect x="64.3" y="1176" width="96.3" height="96.29999999999995" fill="#f8f8f8"/>
<rect x="67.3" y="1179" width="90.3" height="90.29999999999995" fill="#1a1a1a"/>
<polygon points="69.61,1182.01 112.25,1182.01 112.25,1266.29 69.61,1266.29" fill="#f8f8f8" />
<polygon points="75.51,1217.14 90.33,1217.14 90.33,1206.83 108.75,1224.65 90.33,1241.57 90.33,1231.86 75.51,1231.86" fill="#1a1a1a" />
<text x="175.5" y="1207.7" style="font-family:'Liberation Sans';font-size:17.46px;font-weight:400" fill="#d4d4d4" text-anchor="start" textLength="58.0" lengthAdjust="spacingAndGlyphs">Slide In</text>
<text x="175.5" y="1231.9" style="font-family:'Liberation Sans';font-size:17.46px;font-weight:400" fill="#6e6e6e" text-anchor="start" textLength="41.0" lengthAdjust="spacingAndGlyphs">Wipe</text>
<rect x="64.3" y="1287" width="96.3" height="96.29999999999995" fill="#f8f8f8"/>
<rect x="67.3" y="1290" width="90.3" height="90.29999999999995" fill="#1a1a1a"/>
<polygon points="69.61,1293.01 112.25,1293.01 112.25,1377.29 69.61,1377.29" fill="#f8f8f8" />
<polygon points="75.51,1328.14 90.33,1328.14 90.33,1317.83 108.75,1335.65 90.33,1352.57 90.33,1342.86 75.51,1342.86" fill="#1a1a1a" />
<polygon points="117.56,1328.14 132.37,1328.14 132.37,1317.83 150.49,1335.65 132.37,1352.57 132.37,1342.86 117.56,1342.86" fill="#f8f8f8" />
<text x="175.5" y="1318.7" style="font-family:'Liberation Sans';font-size:17.46px;font-weight:400" fill="#d4d4d4" text-anchor="start" textLength="94.7" lengthAdjust="spacingAndGlyphs">Slide In/Out</text>
<text x="175.5" y="1342.9" style="font-family:'Liberation Sans';font-size:17.46px;font-weight:400" fill="#6e6e6e" text-anchor="start" textLength="41.0" lengthAdjust="spacingAndGlyphs">Wipe</text>
<rect x="64.3" y="1398" width="96.3" height="96.29999999999995" fill="#f8f8f8"/>
<rect x="67.3" y="1401" width="90.3" height="90.29999999999995" fill="#1a1a1a"/>
<polygon points="69.61,1404.01 112.25,1404.01 112.25,1488.29 69.61,1488.29" fill="#f8f8f8" />
<text x="175.5" y="1429.7" style="font-family:'Liberation Sans';font-size:17.46px;font-weight:400" fill="#d4d4d4" text-anchor="start" textLength="72.6" lengthAdjust="spacingAndGlyphs">Slide Out</text>
<text x="175.5" y="1453.9" style="font-family:'Liberation Sans';font-size:17.46px;font-weight:400" fill="#6e6e6e" text-anchor="start" textLength="41.0" lengthAdjust="spacingAndGlyphs">Wipe</text>
</g>
<path d="M47.5,1120.5 L53.2,1131 L47.5,1142" fill="none" stroke="#8c8c8c" stroke-width="2.6" opacity="0.8"/>
<defs><linearGradient id="fadeR" x1="0" x2="1"><stop offset="0" stop-color="#262626" stop-opacity="0"/><stop offset="1" stop-color="#262626" stop-opacity="1"/></linearGradient><clipPath id="sclip"><rect x="47" y="1330" width="8" height="40"/></clipPath></defs>
<rect x="47" y="1237" width="8" height="3" fill="#eeeeee"/>
<rect x="47" y="1240" width="8" height="3" fill="#2a2a2a"/>
<rect x="47" y="1243" width="8" height="84" fill="#dcdcdc"/>
<rect x="47" y="1327" width="8" height="3" fill="#2a2a2a"/>
<rect x="47" y="1330" width="8" height="3" fill="#eeeeee"/>
<g clip-path="url(#sclip)">
<text x="47.5" y="1357.4" style="font-family:'Liberation Sans';font-size:18.72px;font-weight:400" fill="#c8c8c8" text-anchor="start">S</text>
</g>
<rect x="50" y="1230" width="6" height="140" fill="url(#fadeR)"/>
<rect x="42.95" y="795.05" width="564.6" height="658.05" fill="none" stroke="#f66a14" stroke-width="7.8" rx="1"/>
</svg>
</body></html>
